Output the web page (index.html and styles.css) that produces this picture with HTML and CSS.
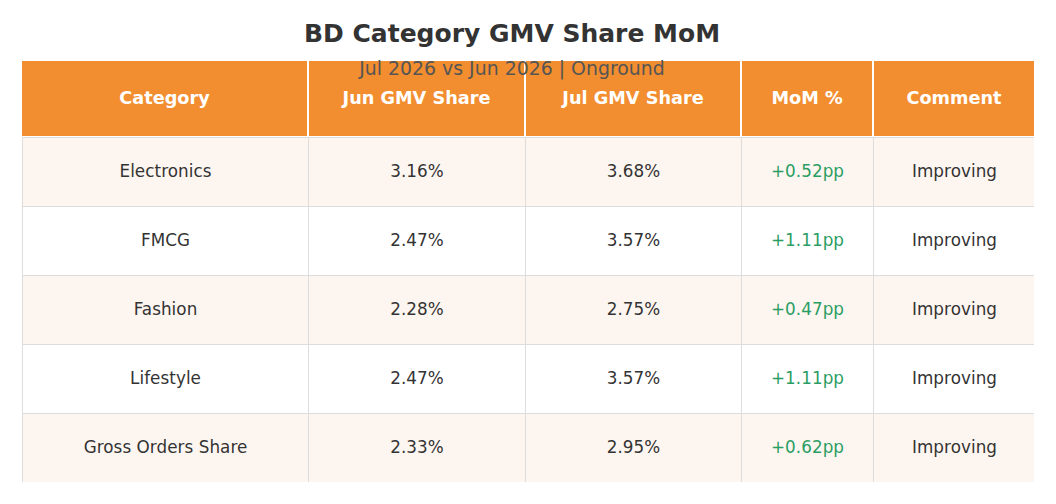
FILE: index.html
```html
<!DOCTYPE html>
<html lang="en">
<head>
<meta charset="utf-8">
<title>BD Category GMV Share MoM</title>
<link rel="stylesheet" href="styles.css">
</head>
<body>
<div class="page">
  <div class="heading">
    <h1 class="title">BD Category GMV Share MoM</h1>
    <div class="subtitle">Jul 2026 vs Jun 2026 | Onground</div>
  </div>
  <div class="table-wrap">
    <div class="grid">
      <div class="th">Category</div>
      <div class="th">Jun GMV Share</div>
      <div class="th">Jul GMV Share</div>
      <div class="th">MoM %</div>
      <div class="th">Comment</div>

      <div class="td alt">Electronics</div>
      <div class="td alt">3.16%</div>
      <div class="td alt">3.68%</div>
      <div class="td alt up">+0.52pp</div>
      <div class="td alt">Improving</div>

      <div class="td">FMCG</div>
      <div class="td">2.47%</div>
      <div class="td">3.57%</div>
      <div class="td up">+1.11pp</div>
      <div class="td">Improving</div>

      <div class="td alt">Fashion</div>
      <div class="td alt">2.28%</div>
      <div class="td alt">2.75%</div>
      <div class="td alt up">+0.47pp</div>
      <div class="td alt">Improving</div>

      <div class="td">Lifestyle</div>
      <div class="td">2.47%</div>
      <div class="td">3.57%</div>
      <div class="td up">+1.11pp</div>
      <div class="td">Improving</div>

      <div class="td alt">Gross Orders Share</div>
      <div class="td alt">2.33%</div>
      <div class="td alt">2.95%</div>
      <div class="td alt up">+0.62pp</div>
      <div class="td alt">Improving</div>
    </div>
  </div>
</div>
</body>
</html>
```

FILE: styles.css
```css
html, body {
  margin: 0;
  padding: 0;
  background: #ffffff;
}

body {
  font-family: "DejaVu Sans", "Liberation Sans", sans-serif;
  color: #333333;
}

.page {
  width: 1056px;
  height: 504px;
  overflow: hidden;
}

.heading {
  position: relative;
  width: 1024px;
  height: 61px;
  text-align: center;
}

.title {
  margin: 0;
  padding-top: 19px;
  font-size: 25px;
  line-height: 30px;
  font-weight: bold;
  color: #333333;
}

.subtitle {
  position: absolute;
  left: 0;
  right: 0;
  top: 56px;
  font-size: 18.9px;
  line-height: 24px;
  color: #555555;
  z-index: 2;
}

.table-wrap {
  margin-left: 22px;
  width: 1012px;
  height: 421px;
  overflow: hidden;
}

.grid {
  display: grid;
  grid-template-columns: 286px 217px 216px 132px 162px;
  grid-auto-rows: 69px;
  grid-template-rows: 76px;
  width: 1013px;
}

.th {
  box-sizing: border-box;
  background: #f28e2f;
  color: #ffffff;
  font-weight: bold;
  font-size: 17.7px;
  display: flex;
  align-items: center;
  justify-content: center;
  padding-bottom: 2px;
  border-left: 1px solid #ffffff;
  border-right: 1px solid #ffffff;
  border-bottom: 1px solid #ffffff;
}

.th:first-child {
  border-left: none;
}

.td {
  box-sizing: border-box;
  background: #ffffff;
  font-size: 16.8px;
  letter-spacing: 0.05px;
  color: #333333;
  display: flex;
  align-items: center;
  justify-content: center;
  padding-bottom: 2px;
  border-left: 1px solid #dddddd;
  border-top: 1px solid #dddddd;
}

.td.alt {
  background: #fdf6f0;
}

.td.up {
  color: #2a9d63;
}
```
